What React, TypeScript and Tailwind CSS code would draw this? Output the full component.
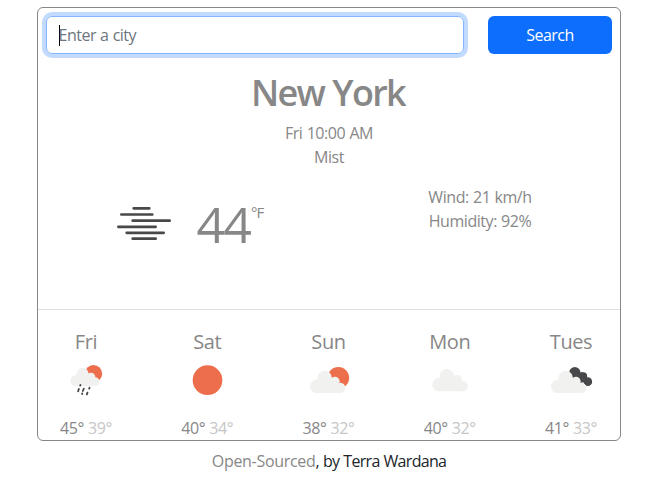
import React from "react";

const cloudFill = "#f1f1f0";
const sunFill = "#ec6e4c";
const darkFill = "#48484a";

function RainIcon() {
  return (
    <svg className="h-10 w-[60px]" viewBox="80.5 180 180 120">
      <circle cx="190" cy="221" r="26" fill={sunFill} />
      <g fill={cloudFill}>
        <circle cx="137" cy="242" r="16.5" />
        <circle cx="157" cy="221" r="18" />
        <circle cx="182" cy="230" r="12" />
        <circle cx="195" cy="245" r="13" />
        <rect x="137" y="226" width="58" height="32.5" />
      </g>
      <g stroke={darkFill} strokeWidth="5.5" strokeLinecap="round">
        <path d="M151 255l-1 2M146 267l-2 7M161 266l-3 7M178 263l-1 3M156 280v2M172 278l-2 5" />
      </g>
    </svg>
  );
}

function SunIcon() {
  return (
    <svg className="h-10 w-[60px]" viewBox="443 180 180 120">
      <circle cx="531.5" cy="240.5" r="44.5" fill={sunFill} />
    </svg>
  );
}

function Cloud() {
  return (
    <g fill={cloudFill}>
      <circle cx="20" cy="47" r="20" />
      <circle cx="44" cy="22" r="22" />
      <circle cx="75" cy="32" r="14" />
      <circle cx="91" cy="51" r="15.5" />
      <path d="M20 27h65l6 39.5H20z" />
    </g>
  );
}

function PartlyIcon() {
  return (
    <svg className="h-10 w-[60px]" viewBox="57 180 180 120">
      <circle cx="175" cy="233.5" r="32.5" fill={sunFill} />
      <g transform="translate(90 212.5)">
        <Cloud />
      </g>
    </svg>
  );
}

function CloudIcon() {
  return (
    <svg className="h-10 w-[60px]" viewBox="421 180 180 120">
      <g transform="translate(458 207)">
        <Cloud />
      </g>
    </svg>
  );
}

function BrokenCloudsIcon() {
  return (
    <svg className="h-10 w-[60px]" viewBox="65.5 180 180 120">
      <g fill={darkFill}>
        <circle cx="164" cy="218" r="17" />
        <circle cx="189" cy="229" r="12" />
        <circle cx="203" cy="245" r="13" />
        <path d="M164 218l25-1 10 28-25 5z" />
      </g>
      <g transform="translate(92.5 212.5)">
        <Cloud />
      </g>
    </svg>
  );
}

function MistIcon() {
  return (
    <svg className="h-[70px] w-[60px]" viewBox="42 0 180 210">
      <path
        d="M101 55h47M64 73.500h93M98 92h111M55 110.500h112M80 128.500h111M98 146h69"
        stroke={darkFill}
        strokeWidth="8"
        strokeLinecap="round"
      />
    </svg>
  );
}

const days = [
  { name: "Fri", high: 45, low: 39, Icon: RainIcon },
  { name: "Sat", high: 40, low: 34, Icon: SunIcon },
  { name: "Sun", high: 38, low: 32, Icon: PartlyIcon },
  { name: "Mon", high: 40, low: 32, Icon: CloudIcon },
  { name: "Tues", high: 41, low: 33, Icon: BrokenCloudsIcon },
];

export default function App() {
  return (
    <div className="h-[483px] w-[670px] bg-white pt-[7px] pl-[37px] font-['Open_Sans',sans-serif] text-[16px] leading-6 tracking-[-0.45px] text-[#878787] [word-spacing:0.5px]">
      <main className="h-[434px] w-[584px] rounded-[6px] border border-[#878787]">
        <form className="flex gap-6 px-2 pt-2">
          <div className="flex h-[38px] w-[418px] items-center rounded-[6px] border border-[#86b7fe] pl-3 text-[#6c757d] ring-4 ring-[#c3daff]">
            <span className="h-[21px] w-px bg-black" />
            <span className="-ml-[1.500px] tracking-[-0.5px]">Enter a city</span>
          </div>
          <button
            type="button"
            className="h-[38px] w-[124px] rounded-[6px] bg-[#0d6efd] tracking-[-0.55px] text-white"
          >
            Search
          </button>
        </form>
        <header className="pt-[15px] text-center">
          <h1 className="h-[52px] pr-[2px] text-[36px] leading-[48px] font-semibold tracking-[-1.700px]">New York</h1>
          <p>Fri 10:00 AM</p>
          <p>Mist</p>
        </header>
        <section className="flex h-[140px]">
          <div className="flex w-[302px] pt-[21px] pl-[76px]">
            <MistIcon />
            <span className="ml-[22.500px] pt-[4px] text-[50px] leading-[60px] tracking-[-1.800px]">44</span>
            <span className="ml-px pt-[10px] text-[15px] leading-6 tracking-[-1px]">°F</span>
          </div>
          <div className="w-[280px] pt-4 text-center">
            <p>Wind: 21 km/h</p>
            <p>Humidity: 92%</p>
          </div>
        </section>
        <section className="flex justify-between border-t border-[#dfdfdf] pt-[17px] text-center">
          {days.map(({ name, high, low, Icon }) => (
            <div key={name} className="flex w-[97px] flex-col items-center">
              <h2 className="h-[33px] pr-px text-[20px] leading-[30px] tracking-[-0.4px]">{name}</h2>
              <Icon />
              <p className="pt-4 pr-px">
                {high}° <span className="text-[#c6c6c6]">{low}°</span>
              </p>
            </div>
          ))}
        </section>
      </main>
      <footer className="w-[584px] pt-2 text-center tracking-[-0.7px] text-[#212529]">
        <span className="tracking-[-0.3px] text-[#878787]">Open-Sourced</span>, by Terra Wardana
      </footer>
    </div>
  );
}
